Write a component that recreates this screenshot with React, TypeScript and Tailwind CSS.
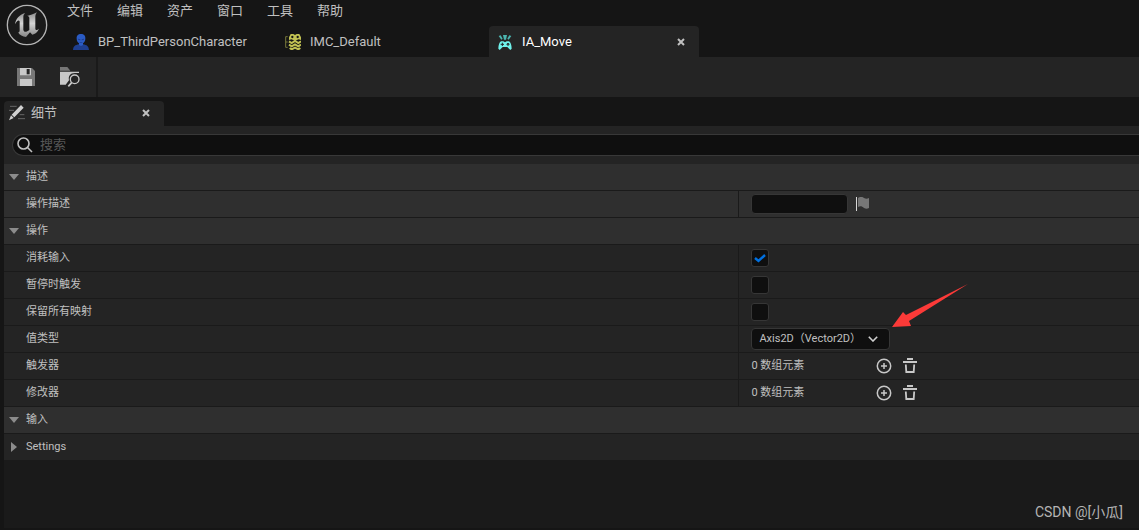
import React, { useState } from 'react';

type IconProps = { className?: string };

const MENUS = ['文件', '编辑', '资产', '窗口', '工具', '帮助'];

const EngineLogo: React.FC<IconProps> = ({ className }) => (
  <svg viewBox="0 0 126 126" className={className} aria-hidden="true">
    <defs>
      <linearGradient id="metal" x1="0" y1="0" x2="0" y2="1">
        <stop offset="0" stopColor="#8d8d8d" />
        <stop offset="0.45" stopColor="#d4d4d4" />
        <stop offset="1" stopColor="#858585" />
      </linearGradient>
    </defs>
    <circle cx="63" cy="63" r="59" fill="#1a1a1a" stroke="#b4b4b4" strokeWidth="4" />
    <path
      fill="url(#metal)"
      d="M27 61C29 45 40 32 57 27C53 32 52 35 52 39V77C53 84 60 86 70 78V41C69 38 67 36 63 36C73 34 82 31 93 25C88 31 88 35 88 42V74C89 80 93 79 99 74C94 85 87 90 79 92L72 85L60 99C50 98 41 94 36 85C39 86 41 84 41 79V52C38 47 32 51 27 61Z"
    />
  </svg>
);

const PersonIcon: React.FC<IconProps> = ({ className }) => (
  <svg viewBox="0 0 48 48" className={className} aria-hidden="true">
    <path fill="#1f3f8f" d="M0 48C1 37 6 33 18 31L24 37L30 31C42 33 47 37 48 48Z" />
    <path fill="#2a5bc4" d="M24 0C33 0 38 6 37 14C37 20 34 25 30 28V33L24 37L18 33V28C14 25 11 20 11 14C10 6 15 0 24 0Z" />
    <path fill="#1f3f8f" d="M15 14L22 16V19L16 18ZM33 14L26 16V19L32 18ZM20 25H28V27H20Z" />
  </svg>
);

const MappingIcon: React.FC<IconProps> = ({ className }) => (
  <svg viewBox="0 0 48 48" className={className} aria-hidden="true">
    <path fill="none" stroke="#77773a" strokeWidth="3" d="M8 8H2V40H8M2 24H8" />
    <path fill="#c2c253" d="M17 0H25L30 3L35 0H43L48 10V18L41 16L30 20L19 16L12 18V10Z" />
    <circle cx="22" cy="9" r="3.5" fill="#151515" />
    <circle cx="38" cy="9" r="3.5" fill="#151515" />
    <g fill="none" stroke="#c2c253" strokeWidth="6">
      <path d="M12 22L20 27L30 21L40 27L48 22" />
      <path d="M12 32L20 37L30 31L40 37L48 32" />
      <path d="M14 42L20 46L30 41L40 46L46 42" />
    </g>
  </svg>
);

const ActionIcon: React.FC<IconProps> = ({ className }) => (
  <svg viewBox="0 0 48 48" className={className} aria-hidden="true">
    <path fill="#4bb5b0" d="M18 3H30L27 17H21ZM5 6L11 4L17 14L13 17ZM43 6L37 4L31 14L35 17Z" />
    <path fill="#6ff2eb" d="M12 22H19L24 25L29 22H36C41 25 44 34 44 44L40 48L31 39H17L8 48L4 44C4 34 7 25 12 22Z" />
    <path stroke="#242424" strokeWidth="3" d="M16 26V36M11 31H21" />
    <circle cx="33" cy="31" r="4" fill="#242424" />
    <circle cx="33" cy="31" r="1" fill="#6ff2eb" />
  </svg>
);

const SaveIcon: React.FC<IconProps> = ({ className }) => (
  <svg viewBox="0 0 54 54" className={className} aria-hidden="true">
    <path fill="#777777" d="M0 0H45L54 9V54H0Z" />
    <path fill="#c8c8c8" d="M9 0H42V22H9ZM9 33H45V54H9Z" />
    <path fill="#242424" d="M29 3H38V19H29Z" />
  </svg>
);

const BrowseIcon: React.FC<IconProps> = ({ className }) => (
  <svg viewBox="0 0 60 60" className={className} aria-hidden="true">
    <path fill="#777777" d="M0 0H22L31 11H0Z" />
    <path fill="#c8c8c8" d="M0 14H57V18H45C30 18 24 28 27 40L17 53H0Z" />
    <circle cx="44" cy="37" r="13" fill="#242424" stroke="#c8c8c8" strokeWidth="4" />
    <path stroke="#c8c8c8" strokeWidth="5" d="M35 47L25 58" />
  </svg>
);

const DetailsIcon: React.FC<IconProps> = ({ className }) => (
  <svg viewBox="0 0 48 48" className={className} aria-hidden="true">
    <path stroke="#666666" strokeWidth="3" d="M3 4H23M0 16H15M32 29H46M27 41H48" />
    <path fill="#d0d0d0" d="M36 0L44 8L16 37L8 29ZM6 31L14 39L0 46Z" />
  </svg>
);

const CloseIcon: React.FC<IconProps> = ({ className }) => (
  <svg viewBox="0 0 8 8" className={className} aria-hidden="true">
    <path stroke="currentColor" strokeWidth="2" d="M1 1L7 7M7 1L1 7" />
  </svg>
);

const SearchIcon: React.FC<IconProps> = ({ className }) => (
  <svg viewBox="0 0 16 16" className={className} fill="none" stroke="currentColor" strokeWidth="1.6" aria-hidden="true">
    <circle cx="6.5" cy="6.5" r="5.5" />
    <path d="M10.5 10.5L15 15" />
  </svg>
);

const FlagIcon: React.FC<IconProps> = ({ className }) => (
  <svg viewBox="0 0 14 14" className={className} aria-hidden="true">
    <path fill="#d8d8d8" d="M0 0H1V14H0Z" />
    <path fill="#777777" d="M2 1C5-1 7 0 8 1C10 2 11 2 13 1V11C11 12 10 12 8 11C6 9 4 9 2 10Z" />
  </svg>
);

const PlusIcon: React.FC<IconProps> = ({ className }) => (
  <svg viewBox="0 0 16 16" className={className} fill="none" stroke="currentColor" strokeWidth="1.5" aria-hidden="true">
    <circle cx="8" cy="8" r="6.7" />
    <path d="M8 5V11M5 8H11" />
  </svg>
);

const TrashIcon: React.FC<IconProps> = ({ className }) => (
  <svg viewBox="0 0 16 16" className={className} fill="none" stroke="currentColor" aria-hidden="true">
    <path strokeWidth="2" d="M5 1H11M1 4H15" />
    <path strokeWidth="1.8" d="M3.8 6.5L4.3 14H11.7L12.2 6.5" />
  </svg>
);

const CheckRow: React.FC<{ id: string; label: string; defaultChecked?: boolean }> = ({ id, label, defaultChecked }) => (
  <Row id={id} label={label}>
    <span className="relative flex">
      <input
        id={id}
        type="checkbox"
        defaultChecked={defaultChecked}
        className="peer h-[18px] w-[18px] appearance-none rounded-[3px] border border-[#363636] bg-[#0f0f0f]"
      />
      <svg
        viewBox="0 0 18 18"
        className="pointer-events-none absolute inset-0 hidden h-[18px] w-[18px] peer-checked:block"
        aria-hidden="true"
      >
        <path fill="none" stroke="#0070e0" strokeWidth="2.4" d="M4 9L7.5 12L14 6" />
      </svg>
    </span>
  </Row>
);

const ArrayRow: React.FC<{ label: string }> = ({ label }) => (
  <Row label={label}>
    <span className="w-[125px]">0 数组元素</span>
    <button type="button" aria-label={`${label} 添加元素`} className="mr-[10px] text-[#c8c8c8]">
      <PlusIcon className="h-4 w-4" />
    </button>
    <button type="button" aria-label={`${label} 清空`} className="text-[#c8c8c8]">
      <TrashIcon className="h-4 w-4" />
    </button>
  </Row>
);

const Row: React.FC<{ id?: string; label: string; light?: boolean; children: React.ReactNode }> = ({
  id,
  label,
  light,
  children,
}) => (
  <div
    className={`grid h-[27px] grid-cols-[11fr_6fr] border-b border-[#1a1a1a] ${light ? 'bg-[#2f2f2f]' : 'bg-[#242424]'}`}
  >
    <div className="flex items-center pl-[22px]">
      {id ? <label htmlFor={id}>{label}</label> : <span>{label}</span>}
    </div>
    <div className="flex items-center border-l border-[#1a1a1a] pl-3">{children}</div>
  </div>
);

const Section: React.FC<{ title: string; open?: boolean; children?: React.ReactNode }> = ({
  title,
  open: initial = true,
  children,
}) => {
  const [open, setOpen] = useState(initial);

  return (
    <section>
      <button
        type="button"
        aria-expanded={open}
        onClick={() => setOpen(!open)}
        className={`flex h-[27px] w-full items-center border-b border-[#1a1a1a] pl-[5px] text-left ${open ? 'bg-[#2f2f2f]' : 'bg-[#242424]'}`}
      >
        <svg viewBox="0 0 10 10" className="mr-[7px] h-[10px] w-[10px]" aria-hidden="true">
          <path fill="#8c8c8c" d={open ? 'M0 2H10L5 8Z' : 'M2 0L8 5L2 10Z'} />
        </svg>
        <span>{title}</span>
      </button>
      {open && children}
    </section>
  );
};

const App: React.FC = () => {
  return (
    <div className="flex min-h-screen flex-col overflow-x-hidden bg-[#151515] font-[Roboto,'Noto_Sans_CJK_SC',sans-serif] text-[#c0c0c0]">
      {/* Title bar: menu and document tabs */}
      <header className="flex h-[57px]">
        <div className="w-[65px] pt-1 pl-[6px]">
          <EngineLogo className="h-[42px] w-[42px]" />
        </div>
        <div className="flex flex-1 flex-col justify-between">
          <nav className="flex h-[22px] items-center gap-6 pl-[2px] text-[13px]">
            {MENUS.map((menu) => (
              <button key={menu} type="button">
                {menu}
              </button>
            ))}
          </nav>
          <div className="flex gap-[2px] text-[13px]">
            <button type="button" className="flex h-[31px] w-[210px] items-center pl-2">
              <PersonIcon className="mr-[9px] h-4 w-4" />
              BP_ThirdPersonCharacter
            </button>
            <button type="button" className="flex h-[31px] w-[210px] items-center pl-2">
              <MappingIcon className="mr-[9px] h-4 w-4" />
              IMC_Default
            </button>
            <div className="flex h-[31px] w-[210px] items-center rounded-t-[4px] bg-[#242424] pr-[14px] pl-2 text-white">
              <ActionIcon className="mr-[9px] h-4 w-4" />
              <span className="flex-1">IA_Move</span>
              <button type="button" aria-label="关闭 IA_Move" className="text-[#c0c0c0]">
                <CloseIcon className="h-2 w-2" />
              </button>
            </div>
          </div>
        </div>
      </header>

      {/* Toolbar */}
      <div className="flex h-10 bg-[#242424]">
        <div className="flex items-center gap-[25px] border-r-2 border-[#1a1a1a] pr-4 pl-[17px]">
          <button type="button" aria-label="保存">
            <SaveIcon className="h-[18px] w-[18px]" />
          </button>
          <button type="button" aria-label="浏览">
            <BrowseIcon className="h-5 w-5" />
          </button>
        </div>
      </div>

      {/* Details panel */}
      <main className="flex flex-1 flex-col pt-1 pb-[2px] pl-1">
        <div className="flex h-[25px] w-40 items-center rounded-t-[4px] bg-[#242424] pr-[14px] pb-[2px] pl-[5px] text-[13px]">
          <DetailsIcon className="mr-[6px] h-4 w-4" />
          <span className="flex-1">细节</span>
          <button type="button" aria-label="关闭 细节">
            <CloseIcon className="h-2 w-2" />
          </button>
        </div>
        <div className="bg-[#242424] py-2 pl-2">
          <div className="flex h-[22px] items-center rounded-l-full border border-r-0 border-[#383838] bg-[#0f0f0f] pl-1">
            <SearchIcon className="mr-[7px] h-4 w-4" />
            <input
              type="text"
              aria-label="搜索"
              placeholder="搜索"
              className="h-5 flex-1 bg-transparent pb-[2px] text-[13px] outline-none placeholder:text-[#575757]"
            />
          </div>
        </div>

        <div className="flex-1 bg-[#1a1a1a] text-[11px]">
          <Section title="描述">
            <Row id="description" label="操作描述" light>
              <input
                id="description"
                type="text"
                className="mr-2 h-5 w-[97px] rounded-[4px] border border-[#363636] bg-[#0f0f0f] px-2 outline-none"
              />
              <button type="button" aria-label="本地化">
                <FlagIcon className="h-[14px] w-[14px]" />
              </button>
            </Row>
          </Section>
          <Section title="操作">
            <CheckRow id="consume" label="消耗输入" defaultChecked />
            <CheckRow id="paused" label="暂停时触发" />
            <CheckRow id="reserve" label="保留所有映射" />
            <Row id="value-type" label="值类型">
              <div className="relative">
                <select
                  id="value-type"
                  className="block h-[22px] w-[139px] appearance-none rounded-[4px] border border-[#363636] bg-[#0f0f0f] pr-6 pl-[7px] outline-none"
                >
                  <option>Axis2D（Vector2D）</option>
                </select>
                <svg
                  viewBox="0 0 10 6"
                  className="pointer-events-none absolute top-2 right-3 h-[6px] w-[10px]"
                  aria-hidden="true"
                >
                  <path fill="none" stroke="#d0d0d0" strokeWidth="1.6" d="M0.8 0.8L5 5L9.2 0.8" />
                </svg>
                <svg
                  viewBox="0 0 76 43"
                  className="pointer-events-none absolute bottom-[23px] left-[141px] h-[43px] w-[76px]"
                  aria-hidden="true"
                >
                  <path fill="#fc3a38" d="M0 43L11 28L14 31L76 0L17 37L19 42Z" />
                </svg>
              </div>
            </Row>
            <ArrayRow label="触发器" />
            <ArrayRow label="修改器" />
          </Section>
          <Section title="输入" />
          <Section title="Settings" open={false} />
        </div>
        <div className="flex justify-end bg-[#1a1a1a] pr-4 pb-[5px] text-[14px] text-[#b4b4b4]">
          CSDN @[小瓜]
        </div>
      </main>
    </div>
  );
};

export default App;
